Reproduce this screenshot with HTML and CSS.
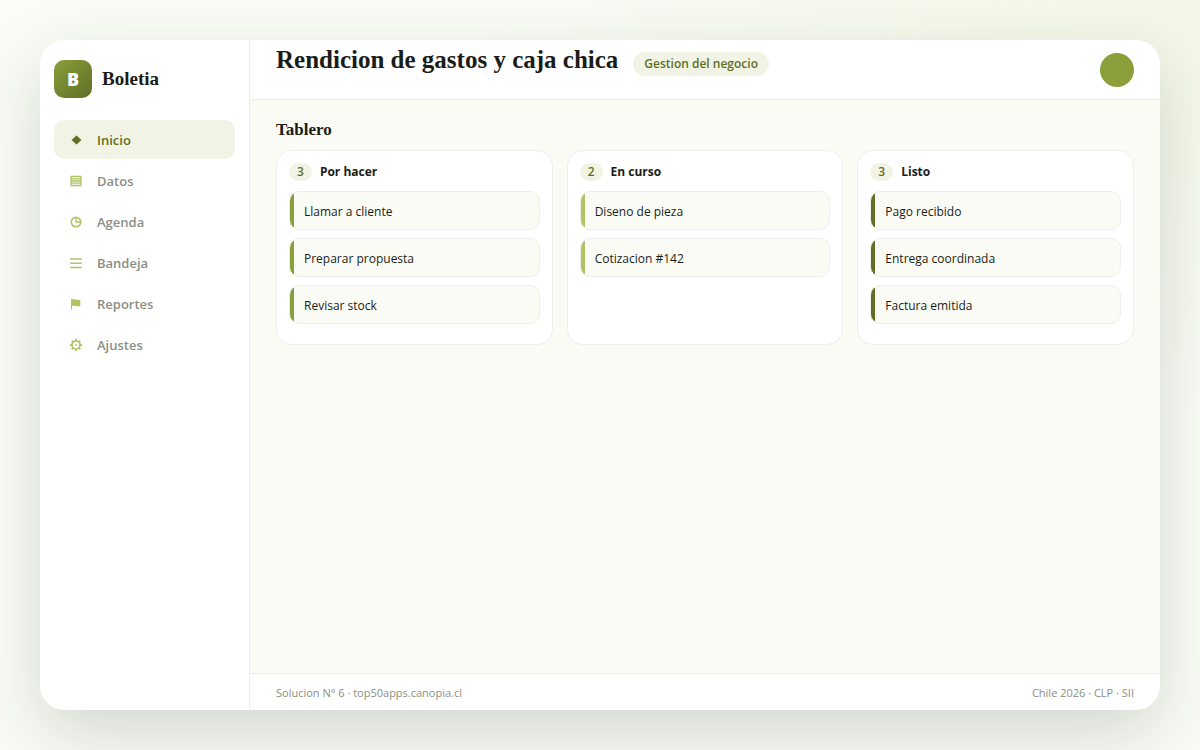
FILE: index.html
```html
<!DOCTYPE html>
<html lang="es">
<head>
  <meta charset="UTF-8">
  <meta name="viewport" content="width=device-width, initial-scale=1.0">
  <title>Boletia - Rendicion de gastos y caja chica</title>
  <link rel="stylesheet" href="styles.css">
</head>
<body>
  <div class="app">
    <aside class="sidebar">
      <div class="brand">
        <div class="logo">B</div>
        <span class="brand-name">Boletia</span>
      </div>
      <nav class="nav">
        <a class="nav-item active" href="#inicio">
          <svg class="nav-icon" viewBox="0 0 14 14"><path d="M7.500 2.500 12.500 7 7.500 11.500 2.500 7z" fill="currentColor"/></svg>
          Inicio
        </a>
        <a class="nav-item" href="#datos">
          <svg class="nav-icon" viewBox="0 0 14 14"><path fill="none" stroke="currentColor" stroke-width="1.300" d="M2 2.500h10v9H2zM2 4.800h10M2 7h10M2 9.200h10"/></svg>
          Datos
        </a>
        <a class="nav-item" href="#agenda">
          <svg class="nav-icon" viewBox="0 0 14 14"><g fill="none" stroke="currentColor" stroke-width="1.700"><circle cx="7" cy="7" r="4.700"/><path stroke-width="1.400" d="M7 2.300V7h4.700"/></g></svg>
          Agenda
        </a>
        <a class="nav-item" href="#bandeja">
          <svg class="nav-icon" viewBox="0 0 14 14"><path fill="none" stroke="currentColor" stroke-width="1.500" d="M1.200 3h11.600M1.200 7.200h11.600M1.200 11.500h11.600"/></svg>
          Bandeja
        </a>
        <a class="nav-item" href="#reportes">
          <svg class="nav-icon" viewBox="0 0 14 14"><path fill="currentColor" d="M2 2h1v.5c2.800-.7 4.700 1.200 8.300.3v6.200c-3.800.9-5.500-.9-8.300-.2V12.500H2z"/></svg>
          Reportes
        </a>
        <a class="nav-item" href="#ajustes">
          <svg class="nav-icon" viewBox="0 0 14 14"><g fill="none" stroke="currentColor"><circle cx="7" cy="7" r="4" stroke-width="1.700"/><path stroke-width="1.900" d="M7 1v1.800M7 11.200V13M1 7h1.800M11.200 7H13M2.800 2.800l1.200 1.200M10 10l1.200 1.200M11.200 2.800 10 4M4 10l-1.200 1.200"/></g><circle cx="7" cy="7" r="1" fill="currentColor"/></svg>
          Ajustes
        </a>
      </nav>
    </aside>

    <div class="main">
      <header class="topbar">
        <div class="topbar-title">
          <h1>Rendicion de gastos y caja chica</h1>
          <span class="tag">Gestion del negocio</span>
        </div>
        <div class="avatar"></div>
      </header>

      <main class="content">
        <h2>Tablero</h2>
        <div class="board">
          <section class="column todo">
            <h3><span class="count">3</span>Por hacer</h3>
            <div class="card">Llamar a cliente</div>
            <div class="card">Preparar propuesta</div>
            <div class="card">Revisar stock</div>
          </section>
          <section class="column doing">
            <h3><span class="count">2</span>En curso</h3>
            <div class="card">Diseno de pieza</div>
            <div class="card">Cotizacion #142</div>
          </section>
          <section class="column done">
            <h3><span class="count">3</span>Listo</h3>
            <div class="card">Pago recibido</div>
            <div class="card">Entrega coordinada</div>
            <div class="card">Factura emitida</div>
          </section>
        </div>
      </main>

      <footer class="footer">
        <span>Solucion N° 6 · top50apps.canopia.cl</span>
        <span>Chile 2026 · CLP · SII</span>
      </footer>
    </div>
  </div>
</body>
</html>
```
FILE: styles.css
```css
:root {
  --brand: #8a9e3a;
  --brand-dark: #5f6f26;
  --brand-light: #b0c464;
  --soft: #f1f4e4;
  --bg: #fafbf5;
  --line: #eeefea;
  --ink: #1a1d17;
  --muted: #8b8f84;
  --serif: Georgia, "Liberation Serif", serif;
}

* {
  box-sizing: border-box;
}

body {
  margin: 0;
  min-height: 100vh;
  padding: 40px;
  display: flex;
  background: radial-gradient(ellipse 60% 55% at 100% 0, #f4f7e7, #fbfcf7);
  color: var(--ink);
  font-family: "Segoe UI", "Open Sans", sans-serif;
  font-size: 12px;
}

h1,
h2,
h3 {
  margin: 0;
}

.app {
  flex: 1;
  display: flex;
  background: #fff;
  border-radius: 24px;
  overflow: hidden;
  box-shadow: 0 24px 70px rgba(30, 45, 30, 0.18);
}

.sidebar {
  width: 210px;
  padding: 20px 14px;
  border-right: 1px solid var(--line);
}

.brand {
  display: flex;
  align-items: center;
  gap: 10px;
  margin-bottom: 22px;
}

.logo {
  width: 38px;
  height: 38px;
  display: grid;
  place-items: center;
  border-radius: 10px;
  background: linear-gradient(135deg, var(--brand), var(--brand-dark));
  color: #fff;
  font-size: 18px;
  font-weight: 800;
}

.brand-name {
  font-family: var(--serif);
  font-size: 19px;
  font-weight: bold;
}

.nav {
  display: flex;
  flex-direction: column;
  gap: 2px;
}

.nav-item {
  display: flex;
  align-items: center;
  gap: 14px;
  height: 39px;
  padding: 0 15px;
  border-radius: 10px;
  color: var(--muted);
  font-size: 13px;
  font-weight: 600;
  text-decoration: none;
}

.nav-icon {
  width: 14px;
  height: 14px;
  color: var(--brand-light);
}

.nav-item.active {
  background: var(--soft);
  color: var(--brand-dark);
}

.nav-item.active .nav-icon {
  color: var(--brand-dark);
}

.main {
  flex: 1;
  display: flex;
  flex-direction: column;
}

.topbar {
  height: 60px;
  padding: 0 26px;
  display: flex;
  align-items: center;
  justify-content: space-between;
  border-bottom: 1px solid var(--line);
}

.topbar-title {
  display: flex;
  align-items: baseline;
  gap: 15px;
  margin-bottom: 18px;
}

h1 {
  font-family: var(--serif);
  font-size: 25px;
  line-height: 28px;
}

.tag {
  padding: 0 11px;
  border-radius: 12px;
  background: var(--soft);
  color: var(--brand-dark);
  font-size: 12px;
  font-weight: 600;
  line-height: 24px;
}

.avatar {
  width: 34px;
  height: 34px;
  border-radius: 50%;
  background: var(--brand);
}

.content {
  flex: 1;
  padding: 20px 26px;
  background: var(--bg);
}

h2 {
  margin-bottom: 10px;
  font-family: var(--serif);
  font-size: 17px;
  line-height: 20px;
}

.board {
  display: grid;
  grid-template-columns: repeat(3, 1fr);
  gap: 14px;
}

.column {
  padding: 12px;
  background: #fff;
  border: 1px solid var(--line);
  border-radius: 16px;
}

h3 {
  display: flex;
  align-items: center;
  gap: 8px;
  margin-bottom: 10px;
  font-size: 12px;
  line-height: 18px;
}

.count {
  padding: 0 8px;
  border-radius: 10px;
  background: var(--soft);
  color: var(--brand-dark);
  font-weight: 600;
}

.card {
  margin-bottom: 8px;
  padding: 10px 14px 8px;
  background: linear-gradient(var(--stripe), var(--stripe)) 0 0 / 4px 100% no-repeat var(--bg);
  border: 1px solid var(--line);
  border-radius: 10px;
  line-height: 19px;
}

.todo {
  --stripe: var(--brand);
}

.doing {
  --stripe: var(--brand-light);
}

.done {
  --stripe: var(--brand-dark);
}

.footer {
  display: flex;
  justify-content: space-between;
  padding: 10px 26px 8px;
  border-top: 1px solid var(--line);
  color: var(--muted);
  font-size: 11px;
  line-height: 18px;
}
```
